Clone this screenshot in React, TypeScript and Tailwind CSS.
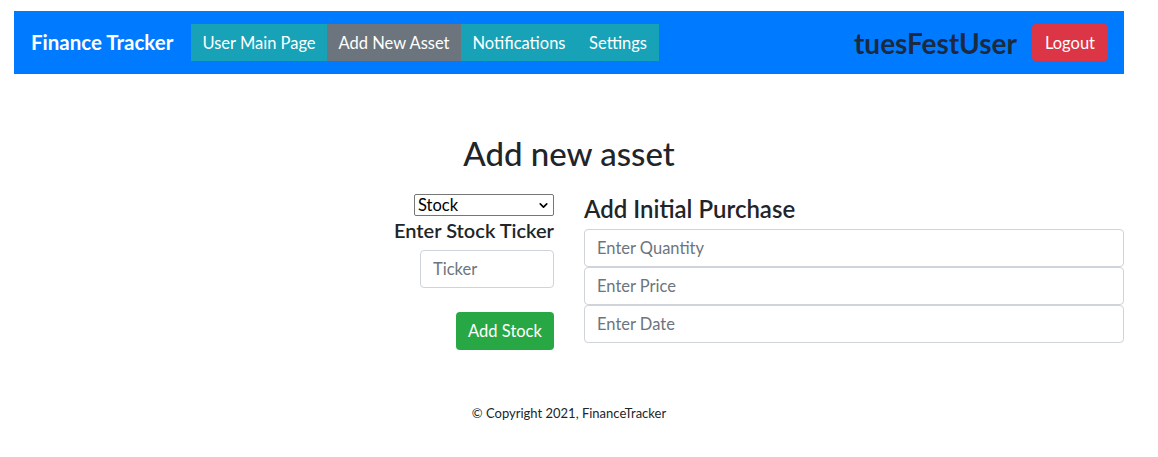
import { ChevronDown } from "lucide-react";

const navItems = [
  { label: "User Main Page", width: "w-[136px]", active: false },
  { label: "Add New Asset", width: "w-[134px]", active: true },
  { label: "Notifications", width: "w-[116px]", active: false },
  { label: "Settings", width: "w-[82px]", active: false },
];

function Navbar() {
  return (
    <nav className="mt-[11px] ml-[14px] w-[1110px] h-[63px] bg-[#007bff] flex items-center pl-[17px] pr-[16px]">
      <span className="w-[160px] text-white font-bold text-[20.5px]">Finance Tracker</span>
      <ul className="flex h-[37px] bg-[#17a2b8]">
        {navItems.map((item) => (
          <li
            key={item.label}
            className={`${item.width} flex items-center justify-center pt-[2px] text-white text-[16.5px] ${
              item.active ? "bg-[#6c757d]" : ""
            }`}
          >
            {item.label}
          </li>
        ))}
      </ul>
      <div className="ml-auto flex items-center gap-[15px]">
        <span className="text-[#1b2a3f] font-bold text-[28px]">tuesFestUser</span>
        <button className="w-[76px] h-[37px] pt-[2px] rounded-[4px] bg-[#dc3545] text-white text-[16.5px]">
          Logout
        </button>
      </div>
    </nav>
  );
}

export default function App() {
  return (
    <main className="w-[1158px] h-[457px] bg-white text-[#212529]" style={{ fontFamily: "Lato, 'Noto Sans', sans-serif" }}>
      <Navbar />
      <div className="ml-[14px] w-[1110px]">
        <h2 className="text-center text-[33px] font-medium mt-[57px] leading-[44px]">Add new asset</h2>
        <div className="flex mt-[18px]">
          <div className="w-[555px] pr-[15px] flex flex-col items-end">
            <div className="relative w-[140px] h-[22px] mt-[1px] border border-[#767676] rounded-[2px] flex items-center pl-[3px] text-[16.5px] text-black">
              Stock
              <ChevronDown className="absolute right-[3px] top-[4px] w-[13px] h-[13px]" strokeWidth={3} />
            </div>
            <h5 className="text-[20px] font-semibold leading-[28px]">Enter Stock Ticker</h5>
            <input
              placeholder="Ticker"
              className="mt-[6px] w-[134px] h-[38px] border border-[#ced4da] rounded-[4px] px-[12px] text-[16.5px] placeholder:text-[#6c757d] outline-none"
            />
            <button className="mt-[24px] w-[98px] h-[38px] rounded-[4px] bg-[#28a745] text-white text-[16.5px]">
              Add Stock
            </button>
          </div>
          <div className="flex-1 pl-[15px] pt-[2px]">
            <h4 className="text-[24px] font-semibold leading-[28px] h-[34px]">Add Initial Purchase</h4>
            <div className="flex flex-col">
              {["Enter Quantity", "Enter Price", "Enter Date"].map((p) => (
                <input
                  key={p}
                  placeholder={p}
                  className="w-full h-[38px] border border-[#ced4da] rounded-[4px] px-[12px] text-[16.5px] placeholder:text-[#6c757d] outline-none"
                />
              ))}
            </div>
          </div>
        </div>
        <footer className="text-center text-[13px] mt-[54px]">© Copyright 2021, FinanceTracker</footer>
      </div>
    </main>
  );
}
